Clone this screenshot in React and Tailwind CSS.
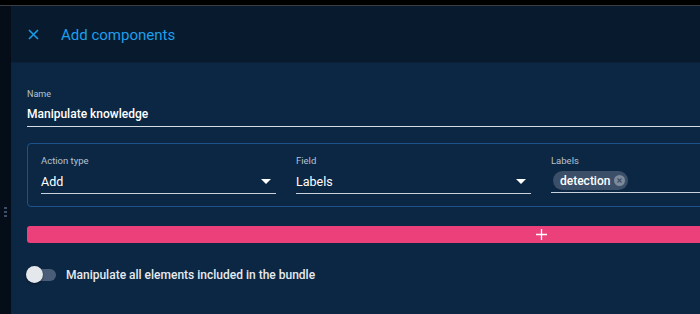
import React, { useState } from 'react'

const font = { fontFamily: 'Roboto, "Noto Sans", sans-serif' }

const Caret = () => (
  <svg width="10" height="6" viewBox="0 0 10 6" className="shrink-0">
    <path d="M0 0 L10 0 L5 5 Z" fill="#ffffff" />
  </svg>
)

const SelectField = ({ label, value, width }) => (
  <div className={`flex flex-col ${width}`}>
    <span className="text-[9.5px] leading-[12px] text-[#b7c2cf]">{label}</span>
    <div className="mt-[6px] flex items-center justify-between border-b border-[#c9d2dc] pb-[3px] pr-[5px]">
      <span className="text-[12.5px] leading-[17px] text-white">{value}</span>
      <Caret />
    </div>
  </div>
)

const App = () => {
  const [bundle, setBundle] = useState(false)

  return (
    <div className="w-[700px] h-[314px] bg-black flex flex-col overflow-hidden" style={font}>
      <div className="h-[6px] shrink-0 bg-black border-b border-[#3b3d40]" />
      <div className="flex flex-1 min-h-0">
        <div className="w-[11px] shrink-0 bg-[#050e18] flex flex-col justify-end pb-[97px] items-center">
          <div className="flex flex-col gap-[2px]">
            <span className="w-[3px] h-[2px] bg-[#3c4f6a]" />
            <span className="w-[3px] h-[2px] bg-[#3c4f6a]" />
            <span className="w-[3px] h-[2px] bg-[#3c4f6a]" />
          </div>
        </div>
        <div className="flex-1 flex flex-col min-w-0 overflow-hidden">
          <div className="h-[57px] shrink-0 bg-[#071a2e] flex items-center border-b border-[#0a2139]">
            <button className="ml-[16px] w-[12px] h-[12px] flex items-center justify-center">
              <svg width="11" height="11" viewBox="0 0 11 11">
                <path d="M1 1 L10 10 M10 1 L1 10" stroke="#1c9be6" strokeWidth="1.6" />
              </svg>
            </button>
            <h1 className="ml-[22px] mt-[2px] text-[15px] leading-[20px] text-[#1e9fea]">Add components</h1>
          </div>
          <div className="flex-1 bg-[#0c2744] pl-[16px] pt-[26px]">
            <div className="w-[1028px] flex flex-col">
              <span className="text-[9px] leading-[11px] text-[#b7c2cf]">Name</span>
              <div className="mt-[6px] border-b border-[#d4dce5] pb-[3px] text-[12px] leading-[17px] font-medium text-white">
                Manipulate knowledge
              </div>
              <div className="mt-[16px] h-[64px] border border-[#1c5289] rounded-[4px] pl-[13px] pt-[11px] flex gap-[20px]">
                <SelectField label="Action type" value="Add" width="w-[235px]" />
                <SelectField label="Field" value="Labels" width="w-[235px]" />
                <div className="flex flex-col flex-1 pr-[13px]">
                  <span className="text-[9.5px] leading-[12px] text-[#b7c2cf]">Labels</span>
                  <div className="mt-[4px] border-b border-[#c9d2dc] pb-[2px] flex">
                    <span className="ml-[2px] h-[19px] rounded-full bg-[#3b4f69] pl-[7px] pr-[3px] flex items-center gap-[4px]">
                      <span className="text-[12px] leading-[14px] font-medium text-white">detection</span>
                      <span className="w-[11px] h-[11px] rounded-full bg-[#7d8a9c] flex items-center justify-center">
                        <svg width="5" height="5" viewBox="0 0 5 5">
                          <path d="M0.5 0.5 L4.5 4.5 M4.5 0.5 L0.5 4.5" stroke="#3b4f69" strokeWidth="1.2" />
                        </svg>
                      </span>
                    </span>
                  </div>
                </div>
              </div>
              <button className="mt-[19px] h-[17px] w-full bg-[#ec407a] rounded-[3px] flex items-center justify-center">
                <svg width="11" height="11" viewBox="0 0 11 11">
                  <path d="M5.5 0 V11 M0 5.5 H11" stroke="#ffffff" strokeWidth="1.3" />
                </svg>
              </button>
              <label className="mt-[24px] flex items-center cursor-pointer">
                <span
                  onClick={() => setBundle(!bundle)}
                  className="relative w-[30px] h-[14px] ml-[-1px]"
                >
                  <span className="absolute left-[4px] top-[1px] w-[26px] h-[12px] rounded-full bg-[#4a5d78]" />
                  <span className="absolute left-0 top-[-2px] w-[17px] h-[17px] rounded-full bg-[#e4e7eb] shadow-[0_1px_2px_rgba(0,0,0,0.5)]" />
                </span>
                <span className="ml-[10px] text-[12px] leading-[16px] font-medium text-[#e6ebf0]">Manipulate all elements included in the bundle</span>
              </label>
            </div>
          </div>
        </div>
      </div>
    </div>
  )
}

export default App
